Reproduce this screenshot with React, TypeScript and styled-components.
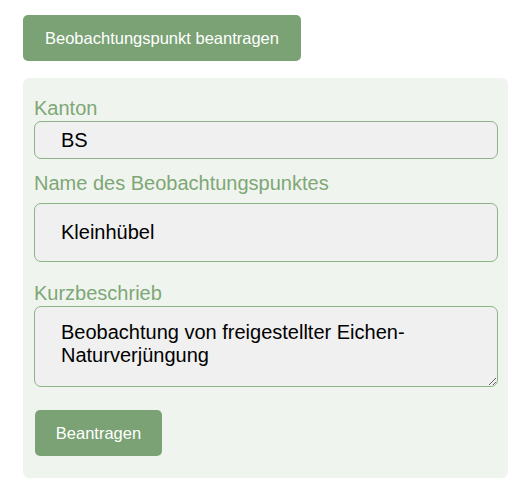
import React, { useState } from "react";
import styled, { createGlobalStyle } from "styled-components";

const GlobalStyle = createGlobalStyle`
  body {
    margin: 0;
    background: #ffffff;
    font-family: "Liberation Sans", Arial, sans-serif;
  }
`;

export default function App() {
  const [kanton, setKanton] = useState("BS");
  const [name, setName] = useState("Kleinhübel");
  const [beschrieb, setBeschrieb] = useState("Beobachtung von freigestellter Eichen-Naturverjüngung");

  return (
    <>
      <GlobalStyle />
      <Page>
        <GreenButton $wide>Beobachtungspunkt beantragen</GreenButton>
        <FormPanel>
          <Field $after={13}>
            <Label $below={1}>Kanton</Label>
            <TextInput $height={38} value={kanton} onChange={(e) => setKanton(e.target.value)} />
          </Field>
          <Field $after={20}>
            <Label $below={8}>Name des Beobachtungspunktes</Label>
            <TextInput $height={59} value={name} onChange={(e) => setName(e.target.value)} />
          </Field>
          <Field $after={23}>
            <Label $below={1}>Kurzbeschrieb</Label>
            <TextArea value={beschrieb} onChange={(e) => setBeschrieb(e.target.value)} />
          </Field>
          <ButtonRow>
            <GreenButton>Beantragen</GreenButton>
          </ButtonRow>
        </FormPanel>
      </Page>
    </>
  );
}

const Page = styled.div`
  display: flex;
  flex-direction: column;
  align-items: flex-start;
  gap: 17px;
  padding: 15px 12px 11px 23px;
`;

const GreenButton = styled.button<{ $wide?: boolean }>`
  height: 46px;
  width: ${(p) => (p.$wide ? "278px" : "127px")};
  border: none;
  border-radius: 5px;
  background: #7aa274;
  color: #ffffff;
  font-family: "Liberation Sans", Arial, sans-serif;
  font-size: 16.5px;
  cursor: pointer;
`;

const FormPanel = styled.div`
  align-self: stretch;
  display: flex;
  flex-direction: column;
  background: #f0f4ee;
  border-radius: 6px;
  padding: 19px 10px 22px 11px;
`;

const Field = styled.div<{ $after: number }>`
  display: flex;
  flex-direction: column;
  margin-bottom: ${(p) => p.$after}px;
`;

const Label = styled.label<{ $below: number }>`
  color: #7ea776;
  font-size: 20px;
  line-height: 23px;
  margin-bottom: ${(p) => p.$below}px;
`;

const TextInput = styled.input<{ $height: number }>`
  box-sizing: border-box;
  width: 464px;
  height: ${(p) => p.$height}px;
  padding: 0 26px;
  border: 1px solid #8cb486;
  border-radius: 7px;
  background: #f0f0f0;
  color: #000000;
  font-family: "Liberation Sans", Arial, sans-serif;
  font-size: 20px;
  outline: none;
`;

const TextArea = styled.textarea`
  display: block;
  box-sizing: border-box;
  width: 464px;
  height: 81px;
  padding: 14px 26px;
  border: 1px solid #8cb486;
  border-radius: 7px;
  background: #f0f0f0;
  color: #000000;
  font-family: "Liberation Sans", Arial, sans-serif;
  font-size: 20px;
  line-height: 23px;
  outline: none;
`;

const ButtonRow = styled.div`
  display: flex;
  padding-left: 1px;
`;
